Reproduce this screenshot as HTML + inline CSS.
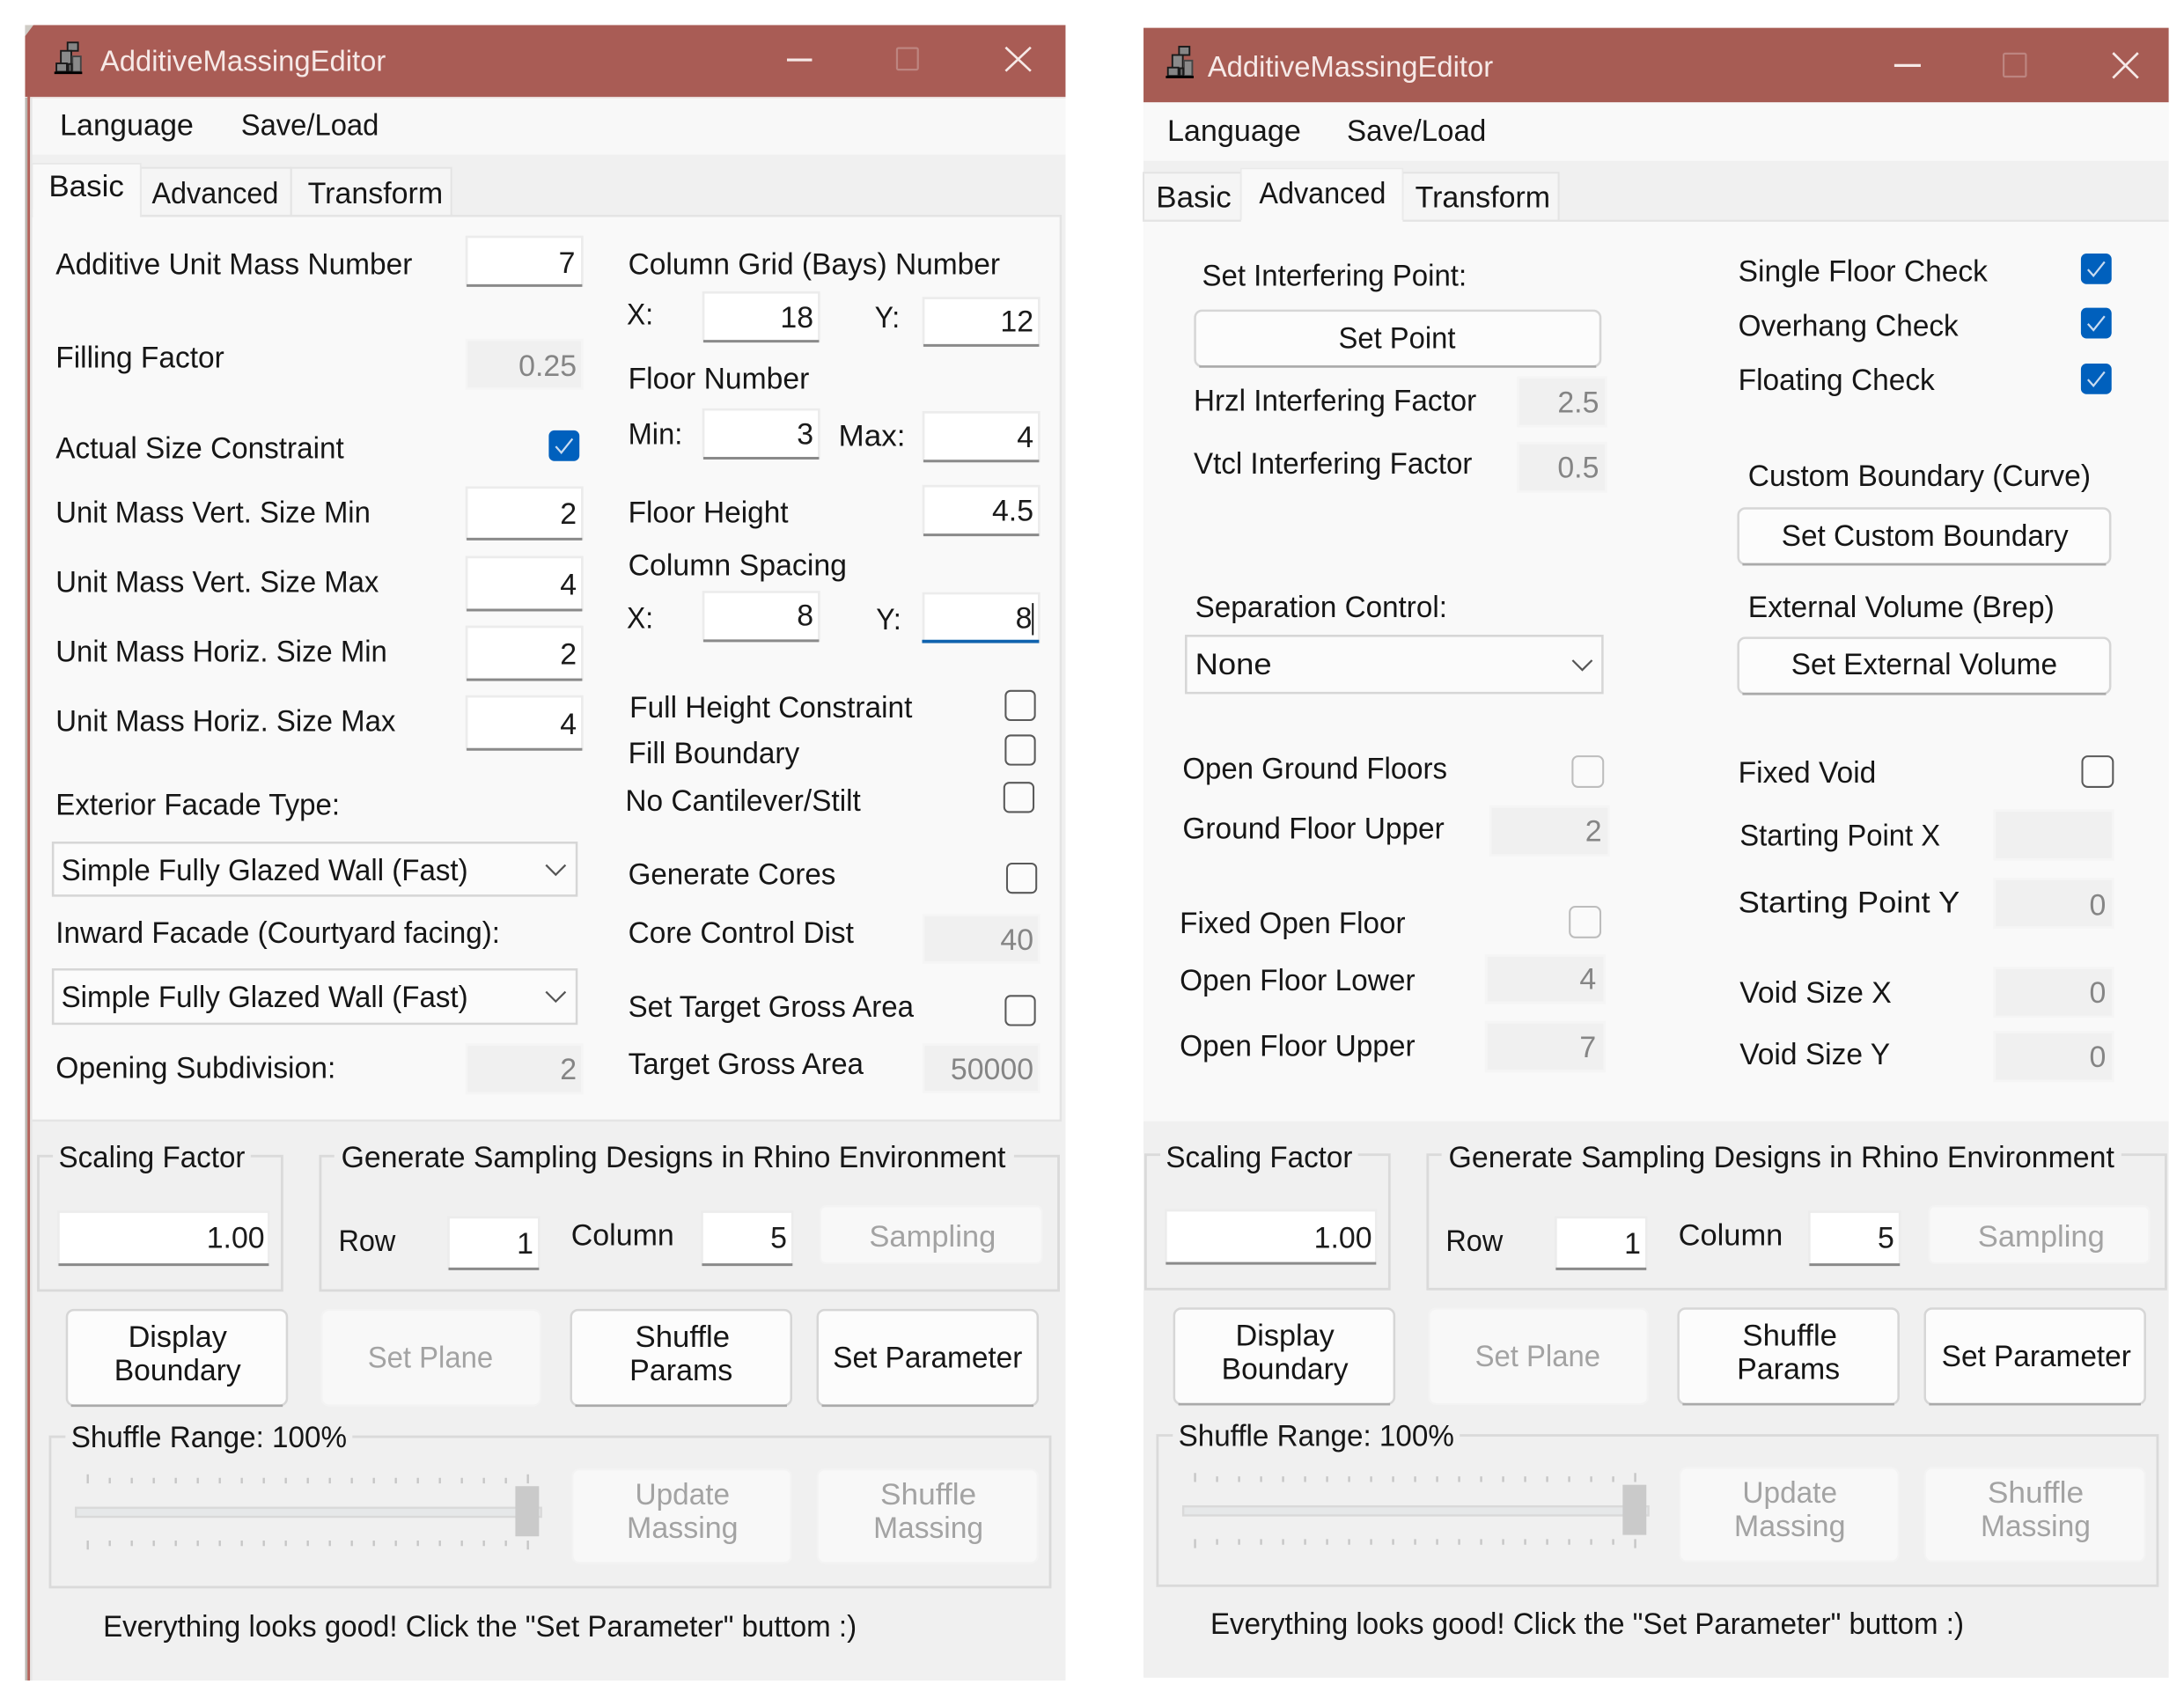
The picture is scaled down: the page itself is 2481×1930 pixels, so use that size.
<!DOCTYPE html>
<html lang="en">
<head>
<meta charset="utf-8">
<title>AdditiveMassingEditor</title>
<style>
html,body{margin:0;padding:0;background:#fff;overflow:hidden}
svg{display:block}
text{font-family:"Liberation Sans",Arial,sans-serif;font-size:21.4px;fill:#161616}
.tt{fill:#f6e9e7;font-size:21px}
.g{fill:#a3a3a3}
.v{fill:#1b1b1b;text-anchor:end}
.d{fill:#858585;text-anchor:end}
.i{fill:#fff;stroke:#ececec;stroke-width:1.7}
.u{stroke:#8a8a8a;stroke-width:1.9;fill:none}
.x{fill:#f0f0f0;stroke:#f5f5f5;stroke-width:1.8}
.b{fill:#fcfcfc;stroke:#d6d6d6;stroke-width:1.6}
.bd{fill:#f8f8f8;stroke:#f3f3f3;stroke-width:1.4}
.bu{stroke:#aaaaaa;stroke-width:1.7;fill:none}
.grp{fill:none;stroke:#dadada;stroke-width:1.8}
.ck{fill:#0060bd}
.cm{fill:none;stroke:#c9dcf1;stroke-width:1.4}
.cb{fill:#fbfbfb;stroke:#5a5a5a;stroke-width:1.3}
.cx{fill:#fafafa;stroke:#bdbdbd;stroke-width:1.3}
.ch{fill:none;stroke:#555;stroke-width:1.4}
.tk{stroke:#c6c6c6;stroke-width:1.5}
.tab{fill:#f5f5f5;stroke:#e4e4e4;stroke-width:1.3}
</style>
</head>
<body>
<svg xmlns="http://www.w3.org/2000/svg" width="2481" height="1930" viewBox="0 0 1568 1219.8" preserveAspectRatio="none">
<defs>
<g id="ico" stroke="#1a1a1a" stroke-width="1.2">
<rect x="48.5" y="30.5" width="7.5" height="6" fill="#858585"/>
<rect x="43.7" y="36.5" width="7.5" height="9.5" fill="#8a8a8a"/>
<rect x="52" y="40.5" width="6" height="11" fill="#8a8a8a" stroke="#444"/>
<rect x="40.5" y="45.5" width="7.5" height="6" fill="#858585"/>
<rect x="49" y="46" width="2.5" height="5.5" fill="#666"/>
<path d="M39 52.3H59" stroke="#000" stroke-width="1.8"/>
</g>
</defs>
<rect width="1568" height="1219.8" fill="#fff"/>

<!-- WINDOW 1 -->
<rect x="18" y="18" width="747" height="1188.5" fill="#f0f0f0"/>
<rect x="18" y="18" width="747" height="51.5" fill="#a95c55"/>
<path d="M18 18H24L18 26Z" fill="#cfccc6"/>
<rect x="21" y="69.5" width="744" height="1" fill="#e8dcda"/>
<rect x="21" y="70.5" width="744" height="40.5" fill="#f8f8f8"/>
<use href="#ico"/>
<text class="tt" x="72" y="51" textLength="205" lengthAdjust="spacingAndGlyphs">AdditiveMassingEditor</text>
<path d="M565 43H583" stroke="#f6e9e7" stroke-width="2"/>
<rect x="644" y="34.5" width="15" height="15.5" rx="1" fill="none" stroke="#bd8580" stroke-width="1.4"/>
<path d="M722 34L740 51M740 34L722 51" stroke="#f6e9e7" stroke-width="1.7" fill="none"/>
<text x="43" y="97" textLength="96" lengthAdjust="spacingAndGlyphs">Language</text>
<text x="173" y="97" textLength="99" lengthAdjust="spacingAndGlyphs">Save/Load</text>

<rect x="101" y="120.5" width="108" height="34.5" class="tab"/>
<rect x="209" y="120.5" width="115" height="34.5" class="tab"/>
<rect x="22" y="155" width="739.5" height="649.5" fill="#f9f9f9" stroke="#e4e4e4" stroke-width="1.6"/>
<path d="M23 155V117.5H101V155" fill="#f9f9f9" stroke="#e8e8e8" stroke-width="1.2"/>
<rect x="23.6" y="150" width="76.8" height="6.5" fill="#f9f9f9"/>
<rect x="18" y="70" width="1.7" height="1136.5" fill="#b9b5af"/>
<rect x="19.7" y="69.5" width="1.9" height="1137" fill="#b4635b"/>
<rect x="21.6" y="70.5" width="1.6" height="1136" fill="#e6e6e6"/>
<text x="35" y="141" textLength="54" lengthAdjust="spacingAndGlyphs">Basic</text>
<text x="109" y="146" textLength="91" lengthAdjust="spacingAndGlyphs">Advanced</text>
<text x="221" y="146" textLength="97" lengthAdjust="spacingAndGlyphs">Transform</text>

<text x="40" y="197" textLength="256" lengthAdjust="spacingAndGlyphs">Additive Unit Mass Number</text>
<rect class="i" x="335" y="170" width="83" height="35"/><path class="u" d="M335 205H418"/><text class="v" x="413" y="196">7</text>
<text x="40" y="264" textLength="121" lengthAdjust="spacingAndGlyphs">Filling Factor</text>
<rect class="x" x="335" y="244" width="83" height="35"/><text class="d" x="414" y="270">0.25</text>
<text x="40" y="329" textLength="207" lengthAdjust="spacingAndGlyphs">Actual Size Constraint</text>
<rect class="ck" x="394" y="309" width="22" height="22" rx="4"/><path class="cm" d="M399 320.5L403 325L411 315"/>
<text x="40" y="375" textLength="226" lengthAdjust="spacingAndGlyphs">Unit Mass Vert. Size Min</text>
<rect class="i" x="335" y="350" width="83" height="37"/><path class="u" d="M335 387H418"/><text class="v" x="414" y="376">2</text>
<text x="40" y="425" textLength="232" lengthAdjust="spacingAndGlyphs">Unit Mass Vert. Size Max</text>
<rect class="i" x="335" y="400" width="83" height="38"/><path class="u" d="M335 438H418"/><text class="v" x="414" y="427">4</text>
<text x="40" y="475" textLength="238" lengthAdjust="spacingAndGlyphs">Unit Mass Horiz. Size Min</text>
<rect class="i" x="335" y="450" width="83" height="38"/><path class="u" d="M335 488H418"/><text class="v" x="414" y="477">2</text>
<text x="40" y="525" textLength="244" lengthAdjust="spacingAndGlyphs">Unit Mass Horiz. Size Max</text>
<rect class="i" x="335" y="500" width="83" height="38"/><path class="u" d="M335 538H418"/><text class="v" x="414" y="527">4</text>
<text x="40" y="585" textLength="204" lengthAdjust="spacingAndGlyphs">Exterior Facade Type:</text>
<rect x="38" y="605" width="376" height="38" fill="#fbfbfb" stroke="#d6d6d6" stroke-width="1.6"/>
<text x="44" y="632" textLength="292" lengthAdjust="spacingAndGlyphs">Simple Fully Glazed Wall (Fast)</text>
<path class="ch" d="M392 621L399 628L406 621"/>
<text x="40" y="677" textLength="319" lengthAdjust="spacingAndGlyphs">Inward Facade (Courtyard facing):</text>
<rect x="38" y="696" width="376" height="39" fill="#fbfbfb" stroke="#d6d6d6" stroke-width="1.6"/>
<text x="44" y="723" textLength="292" lengthAdjust="spacingAndGlyphs">Simple Fully Glazed Wall (Fast)</text>
<path class="ch" d="M392 712L399 719L406 712"/>
<text x="40" y="774" textLength="201" lengthAdjust="spacingAndGlyphs">Opening Subdivision:</text>
<rect class="x" x="335" y="750" width="83" height="35"/><text class="d" x="414" y="775">2</text>

<text x="451" y="197" textLength="267" lengthAdjust="spacingAndGlyphs">Column Grid (Bays) Number</text>
<text x="450" y="233" textLength="19" lengthAdjust="spacingAndGlyphs">X:</text>
<rect class="i" x="505" y="210" width="83" height="35"/><path class="u" d="M505 245H588"/><text class="v" x="584" y="235">18</text>
<text x="628" y="235" textLength="18" lengthAdjust="spacingAndGlyphs">Y:</text>
<rect class="i" x="663" y="214" width="83" height="34"/><path class="u" d="M663 248H746"/><text class="v" x="742" y="238">12</text>
<text x="451" y="279" textLength="130" lengthAdjust="spacingAndGlyphs">Floor Number</text>
<text x="451" y="319" textLength="39" lengthAdjust="spacingAndGlyphs">Min:</text>
<rect class="i" x="505" y="294" width="83" height="35"/><path class="u" d="M505 329H588"/><text class="v" x="584" y="319">3</text>
<text x="602" y="320" textLength="48" lengthAdjust="spacingAndGlyphs">Max:</text>
<rect class="i" x="663" y="296" width="83" height="35"/><path class="u" d="M663 331H746"/><text class="v" x="742" y="321">4</text>
<text x="451" y="375" textLength="115" lengthAdjust="spacingAndGlyphs">Floor Height</text>
<rect class="i" x="663" y="349" width="83" height="35"/><path class="u" d="M663 384H746"/><text class="v" x="742" y="374">4.5</text>
<text x="451" y="413" textLength="157" lengthAdjust="spacingAndGlyphs">Column Spacing</text>
<text x="450" y="451" textLength="19" lengthAdjust="spacingAndGlyphs">X:</text>
<rect class="i" x="505" y="425" width="83" height="35"/><path class="u" d="M505 460H588"/><text class="v" x="584" y="449">8</text>
<text x="629" y="452" textLength="18" lengthAdjust="spacingAndGlyphs">Y:</text>
<rect class="i" x="663" y="426" width="83" height="35"/><path d="M662 460.5H746" stroke="#0f62ae" stroke-width="2.4"/><text class="v" x="741" y="451">8</text><path d="M741.5 433V456" stroke="#111" stroke-width="1.2"/>
<text x="452" y="515" textLength="203" lengthAdjust="spacingAndGlyphs">Full Height Constraint</text>
<rect class="cb" x="722" y="496" width="21" height="21" rx="3.5"/>
<text x="451" y="548" textLength="123" lengthAdjust="spacingAndGlyphs">Fill Boundary</text>
<rect class="cb" x="722" y="528" width="21" height="21" rx="3.5"/>
<text x="449" y="582" textLength="169" lengthAdjust="spacingAndGlyphs">No Cantilever/Stilt</text>
<rect class="cb" x="721" y="562" width="21" height="21" rx="3.5"/>
<text x="451" y="635" textLength="149" lengthAdjust="spacingAndGlyphs">Generate Cores</text>
<rect class="cb" x="723" y="620" width="21" height="21" rx="3.5"/>
<text x="451" y="677" textLength="162" lengthAdjust="spacingAndGlyphs">Core Control Dist</text>
<rect class="x" x="663" y="657" width="83" height="34"/><text class="d" x="742" y="682">40</text>
<text x="451" y="730" textLength="205" lengthAdjust="spacingAndGlyphs">Set Target Gross Area</text>
<rect class="cb" x="722" y="715" width="21" height="21" rx="3.5"/>
<text x="451" y="771" textLength="169" lengthAdjust="spacingAndGlyphs">Target Gross Area</text>
<rect class="x" x="663" y="750" width="83" height="34"/><text class="d" x="742" y="775">50000</text>

<!-- bottom 1 -->
<g>
<rect class="grp" x="27.5" y="830" width="175" height="96.5"/>
<rect x="38" y="820" width="142" height="20" fill="#f0f0f0"/>
<text x="42" y="838" textLength="134" lengthAdjust="spacingAndGlyphs">Scaling Factor</text>
<rect class="i" x="42" y="870" width="151" height="38"/><path class="u" d="M42 908H193"/><text class="v" x="190" y="896">1.00</text>
<rect class="grp" x="230" y="830" width="530" height="96.5"/>
<rect x="240" y="820" width="488" height="20" fill="#f0f0f0"/>
<text x="245" y="838" textLength="477" lengthAdjust="spacingAndGlyphs">Generate Sampling Designs in Rhino Environment</text>
<text x="243" y="898" textLength="41" lengthAdjust="spacingAndGlyphs">Row</text>
<rect class="i" x="322" y="874" width="65" height="37"/><path class="u" d="M322 911H387"/><text class="v" x="383" y="900">1</text>
<text x="410" y="894" textLength="74" lengthAdjust="spacingAndGlyphs">Column</text>
<rect class="i" x="504" y="870" width="65" height="38"/><path class="u" d="M504 908H569"/><text class="v" x="565" y="896">5</text>
<rect class="bd" x="589" y="866" width="159" height="41" rx="4"/>
<text class="g" x="624" y="895" textLength="91" lengthAdjust="spacingAndGlyphs">Sampling</text>
<rect class="b" x="48" y="940.5" width="158" height="68.5" rx="5"/><path class="bu" d="M51 1009.2H203"/>
<text x="92" y="967" textLength="71" lengthAdjust="spacingAndGlyphs">Display</text>
<text x="82" y="991" textLength="91" lengthAdjust="spacingAndGlyphs">Boundary</text>
<rect class="bd" x="231" y="940.5" width="157" height="68.5" rx="5"/>
<text class="g" x="264" y="982" textLength="90" lengthAdjust="spacingAndGlyphs">Set Plane</text>
<rect class="b" x="410" y="940.5" width="158" height="68.5" rx="5"/><path class="bu" d="M413 1009.2H565"/>
<text x="456" y="967" textLength="68" lengthAdjust="spacingAndGlyphs">Shuffle</text>
<text x="452" y="991" textLength="74" lengthAdjust="spacingAndGlyphs">Params</text>
<rect class="b" x="587" y="940.5" width="158" height="68.5" rx="5"/><path class="bu" d="M590 1009.2H742"/>
<text x="598" y="982" textLength="136" lengthAdjust="spacingAndGlyphs">Set Parameter</text>
<rect class="grp" x="36" y="1031.5" width="718" height="108"/>
<rect x="47" y="1021" width="206" height="20" fill="#f0f0f0"/>
<text x="51" y="1039" textLength="198" lengthAdjust="spacingAndGlyphs">Shuffle Range: 100%</text>
<path class="tk" d="M63 1058.5V1065M78.8 1061V1065M94.6 1061V1065M110.4 1061V1065M126.2 1061V1065M142 1061V1065M157.8 1061V1065M173.6 1061V1065M189.4 1061V1065M205.2 1061V1065M221 1061V1065M236.8 1061V1065M252.6 1061V1065M268.4 1061V1065M284.2 1061V1065M300 1061V1065M315.8 1061V1065M331.6 1061V1065M347.4 1061V1065M363.2 1061V1065M379 1058.5V1065"/>
<path class="tk" d="M63 1106V1112.5M78.8 1106V1110M94.6 1106V1110M110.4 1106V1110M126.2 1106V1110M142 1106V1110M157.8 1106V1110M173.6 1106V1110M189.4 1106V1110M205.2 1106V1110M221 1106V1110M236.8 1106V1110M252.6 1106V1110M268.4 1106V1110M284.2 1106V1110M300 1106V1110M315.8 1106V1110M331.6 1106V1110M347.4 1106V1110M363.2 1106V1110M379 1106V1112.5"/>
<rect x="54.5" y="1082.5" width="334" height="6.5" fill="#e6e8e9" stroke="#d9d9d9" stroke-width="1.5"/>
<rect x="370" y="1067" width="17" height="36" fill="#cacaca"/>
<rect class="bd" x="411" y="1055" width="157" height="67" rx="5"/>
<text class="g" x="456" y="1080" textLength="68" lengthAdjust="spacingAndGlyphs">Update</text>
<text class="g" x="450" y="1104" textLength="80" lengthAdjust="spacingAndGlyphs">Massing</text>
<rect class="bd" x="587" y="1055" width="158" height="67" rx="5"/>
<text class="g" x="632" y="1080" textLength="69" lengthAdjust="spacingAndGlyphs">Shuffle</text>
<text class="g" x="627" y="1104" textLength="79" lengthAdjust="spacingAndGlyphs">Massing</text>
<text x="74" y="1175" textLength="541" lengthAdjust="spacingAndGlyphs">Everything looks good! Click the "Set Parameter" buttom :)</text>
</g>

<!-- WINDOW 2 -->
<rect x="821" y="20" width="736" height="1184.5" fill="#f0f0f0"/>
<rect x="821" y="20" width="736" height="53.5" fill="#a75c54"/>
<rect x="821" y="73.5" width="736" height="42" fill="#f9f9f9"/>
<use href="#ico" transform="translate(798,3)"/>
<text class="tt" x="867" y="55" textLength="205" lengthAdjust="spacingAndGlyphs">AdditiveMassingEditor</text>
<path d="M1360 47H1379" stroke="#f6e9e7" stroke-width="2"/>
<rect x="1438.5" y="38.5" width="16" height="16.5" rx="1" fill="none" stroke="#bd8580" stroke-width="1.4"/>
<path d="M1517 38L1535 56M1535 38L1517 56" stroke="#f6e9e7" stroke-width="1.7" fill="none"/>
<text x="838" y="101" textLength="96" lengthAdjust="spacingAndGlyphs">Language</text>
<text x="967" y="101" textLength="100" lengthAdjust="spacingAndGlyphs">Save/Load</text>
<rect x="821" y="124" width="70" height="34.5" class="tab"/>
<rect x="1007" y="124" width="112" height="34.5" class="tab"/>
<rect x="821" y="158.5" width="736" height="646.5" fill="#f9f9f9"/>
<path d="M821 158.5H891M1007 158.5H1557" stroke="#e4e4e4" stroke-width="1.4"/>
<rect x="891" y="121" width="116" height="38" fill="#f9f9f9"/>
<path d="M891 158V121H1007V158" fill="none" stroke="#eaeaea" stroke-width="1"/>
<text x="830" y="149" textLength="54" lengthAdjust="spacingAndGlyphs">Basic</text>
<text x="904" y="146" textLength="91" lengthAdjust="spacingAndGlyphs">Advanced</text>
<text x="1016" y="149" textLength="97" lengthAdjust="spacingAndGlyphs">Transform</text>

<text x="863" y="205" textLength="190" lengthAdjust="spacingAndGlyphs">Set Interfering Point:</text>
<rect class="b" x="858" y="223" width="291" height="40" rx="5"/><path class="bu" d="M861 263.2H1146"/>
<text x="961" y="250" textLength="84" lengthAdjust="spacingAndGlyphs">Set Point</text>
<text x="857" y="295" textLength="203" lengthAdjust="spacingAndGlyphs">Hrzl Interfering Factor</text>
<rect class="x" x="1090" y="271" width="63" height="35"/><text class="d" x="1148" y="296">2.5</text>
<text x="857" y="340" textLength="200" lengthAdjust="spacingAndGlyphs">Vtcl Interfering Factor</text>
<rect class="x" x="1090" y="318" width="63" height="35"/><text class="d" x="1148" y="343">0.5</text>

<text x="1248" y="202" textLength="179" lengthAdjust="spacingAndGlyphs">Single Floor Check</text>
<rect class="ck" x="1494" y="182" width="22" height="22" rx="4"/><path class="cm" d="M1499 193.5L1503 198L1511 188"/>
<text x="1248" y="241" textLength="158" lengthAdjust="spacingAndGlyphs">Overhang Check</text>
<rect class="ck" x="1494" y="221" width="22" height="22" rx="4"/><path class="cm" d="M1499 232.5L1503 237L1511 227"/>
<text x="1248" y="280" textLength="141" lengthAdjust="spacingAndGlyphs">Floating Check</text>
<rect class="ck" x="1494" y="261" width="22" height="22" rx="4"/><path class="cm" d="M1499 272.5L1503 277L1511 267"/>
<text x="1255" y="349" textLength="246" lengthAdjust="spacingAndGlyphs">Custom Boundary (Curve)</text>
<rect class="b" x="1248" y="365" width="267" height="40" rx="5"/><path class="bu" d="M1251 405.2H1512"/>
<text x="1279" y="392" textLength="206" lengthAdjust="spacingAndGlyphs">Set Custom Boundary</text>
<text x="1255" y="443" textLength="220" lengthAdjust="spacingAndGlyphs">External Volume (Brep)</text>
<rect class="b" x="1248" y="458" width="267" height="40" rx="5"/><path class="bu" d="M1251 498.2H1512"/>
<text x="1286" y="484" textLength="191" lengthAdjust="spacingAndGlyphs">Set External Volume</text>
<text x="858" y="443" textLength="181" lengthAdjust="spacingAndGlyphs">Separation Control:</text>
<rect x="851.5" y="456.5" width="299" height="41" fill="#fbfbfb" stroke="#d6d6d6" stroke-width="1.6"/>
<text x="858" y="484" textLength="55" lengthAdjust="spacingAndGlyphs">None</text>
<path class="ch" d="M1129 474L1136 481L1143 474"/>

<text x="849" y="559" textLength="190" lengthAdjust="spacingAndGlyphs">Open Ground Floors</text>
<rect class="cx" x="1129" y="543" width="22" height="22" rx="4"/>
<text x="849" y="602" textLength="188" lengthAdjust="spacingAndGlyphs">Ground Floor Upper</text>
<rect class="x" x="1070" y="579" width="85" height="35"/><text class="d" x="1150" y="604">2</text>
<text x="847" y="670" textLength="162" lengthAdjust="spacingAndGlyphs">Fixed Open Floor</text>
<rect class="cx" x="1127" y="651" width="22" height="22" rx="4"/>
<text x="847" y="711" textLength="169" lengthAdjust="spacingAndGlyphs">Open Floor Lower</text>
<rect class="x" x="1067" y="686" width="85" height="34"/><text class="d" x="1146" y="710">4</text>
<text x="847" y="758" textLength="169" lengthAdjust="spacingAndGlyphs">Open Floor Upper</text>
<rect class="x" x="1067" y="734" width="85" height="35"/><text class="d" x="1146" y="759">7</text>

<text x="1248" y="562" textLength="99" lengthAdjust="spacingAndGlyphs">Fixed Void</text>
<rect class="cb" x="1495" y="543" width="22" height="22" rx="4"/>
<text x="1249" y="607" textLength="144" lengthAdjust="spacingAndGlyphs">Starting Point X</text>
<rect class="x" x="1432" y="582" width="85" height="35"/>
<text x="1248" y="655" textLength="159" lengthAdjust="spacingAndGlyphs">Starting Point Y</text>
<rect class="x" x="1432" y="631" width="85" height="35"/><text class="d" x="1512" y="657">0</text>
<text x="1249" y="720" textLength="109" lengthAdjust="spacingAndGlyphs">Void Size X</text>
<rect class="x" x="1432" y="695" width="85" height="35"/><text class="d" x="1512" y="720">0</text>
<text x="1249" y="764" textLength="108" lengthAdjust="spacingAndGlyphs">Void Size Y</text>
<rect class="x" x="1432" y="741" width="85" height="35"/><text class="d" x="1512" y="766">0</text>

<!-- bottom 2 -->
<g transform="translate(795,-1)">
<rect class="grp" x="27.5" y="830" width="175" height="96.5"/>
<rect x="38" y="820" width="142" height="20" fill="#f0f0f0"/>
<text x="42" y="839" textLength="134" lengthAdjust="spacingAndGlyphs">Scaling Factor</text>
<rect class="i" x="42" y="870" width="151" height="38"/><path class="u" d="M42 908H193"/><text class="v" x="190" y="897">1.00</text>
<rect class="grp" x="230" y="830" width="530" height="96.5"/>
<rect x="240" y="820" width="488" height="20" fill="#f0f0f0"/>
<text x="245" y="839" textLength="478" lengthAdjust="spacingAndGlyphs">Generate Sampling Designs in Rhino Environment</text>
<text x="243" y="899" textLength="41" lengthAdjust="spacingAndGlyphs">Row</text>
<rect class="i" x="322" y="875" width="65" height="37"/><path class="u" d="M322 912H387"/><text class="v" x="383" y="901">1</text>
<text x="410" y="895" textLength="75" lengthAdjust="spacingAndGlyphs">Column</text>
<rect class="i" x="504" y="871" width="65" height="38"/><path class="u" d="M504 909H569"/><text class="v" x="565" y="897">5</text>
<rect class="bd" x="590" y="867" width="158" height="41" rx="4"/>
<text class="g" x="625" y="896" textLength="91" lengthAdjust="spacingAndGlyphs">Sampling</text>
<rect class="b" x="48" y="940.5" width="158" height="68.5" rx="5"/><path class="bu" d="M51 1009.2H203"/>
<text x="92" y="967" textLength="71" lengthAdjust="spacingAndGlyphs">Display</text>
<text x="82" y="991" textLength="91" lengthAdjust="spacingAndGlyphs">Boundary</text>
<rect class="bd" x="231" y="940.5" width="157" height="68.5" rx="5"/>
<text class="g" x="264" y="982" textLength="90" lengthAdjust="spacingAndGlyphs">Set Plane</text>
<rect class="b" x="410" y="940.5" width="158" height="68.5" rx="5"/><path class="bu" d="M413 1009.2H565"/>
<text x="456" y="967" textLength="68" lengthAdjust="spacingAndGlyphs">Shuffle</text>
<text x="452" y="991" textLength="74" lengthAdjust="spacingAndGlyphs">Params</text>
<rect class="b" x="587" y="940.5" width="158" height="68.5" rx="5"/><path class="bu" d="M590 1009.2H742"/>
<text x="599" y="982" textLength="136" lengthAdjust="spacingAndGlyphs">Set Parameter</text>
<rect class="grp" x="36" y="1031.5" width="718" height="108"/>
<rect x="47" y="1021" width="206" height="20" fill="#f0f0f0"/>
<text x="51" y="1039" textLength="198" lengthAdjust="spacingAndGlyphs">Shuffle Range: 100%</text>
<path class="tk" d="M63 1058.5V1065M78.8 1061V1065M94.6 1061V1065M110.4 1061V1065M126.2 1061V1065M142 1061V1065M157.8 1061V1065M173.6 1061V1065M189.4 1061V1065M205.2 1061V1065M221 1061V1065M236.8 1061V1065M252.6 1061V1065M268.4 1061V1065M284.2 1061V1065M300 1061V1065M315.8 1061V1065M331.6 1061V1065M347.4 1061V1065M363.2 1061V1065M379 1058.5V1065"/>
<path class="tk" d="M63 1106V1112.5M78.8 1106V1110M94.6 1106V1110M110.4 1106V1110M126.2 1106V1110M142 1106V1110M157.8 1106V1110M173.6 1106V1110M189.4 1106V1110M205.2 1106V1110M221 1106V1110M236.8 1106V1110M252.6 1106V1110M268.4 1106V1110M284.2 1106V1110M300 1106V1110M315.8 1106V1110M331.6 1106V1110M347.4 1106V1110M363.2 1106V1110M379 1106V1112.5"/>
<rect x="54.5" y="1082.5" width="334" height="6.5" fill="#e6e8e9" stroke="#d9d9d9" stroke-width="1.5"/>
<rect x="370" y="1067" width="17" height="36" fill="#cacaca"/>
<rect class="bd" x="411" y="1055" width="157" height="67" rx="5"/>
<text class="g" x="456" y="1080" textLength="68" lengthAdjust="spacingAndGlyphs">Update</text>
<text class="g" x="450" y="1104" textLength="80" lengthAdjust="spacingAndGlyphs">Massing</text>
<rect class="bd" x="587" y="1055" width="158" height="67" rx="5"/>
<text class="g" x="632" y="1080" textLength="69" lengthAdjust="spacingAndGlyphs">Shuffle</text>
<text class="g" x="627" y="1104" textLength="79" lengthAdjust="spacingAndGlyphs">Massing</text>
<text x="74" y="1174" textLength="541" lengthAdjust="spacingAndGlyphs">Everything looks good! Click the "Set Parameter" buttom :)</text>
</g>
</svg>
</body>
</html>
